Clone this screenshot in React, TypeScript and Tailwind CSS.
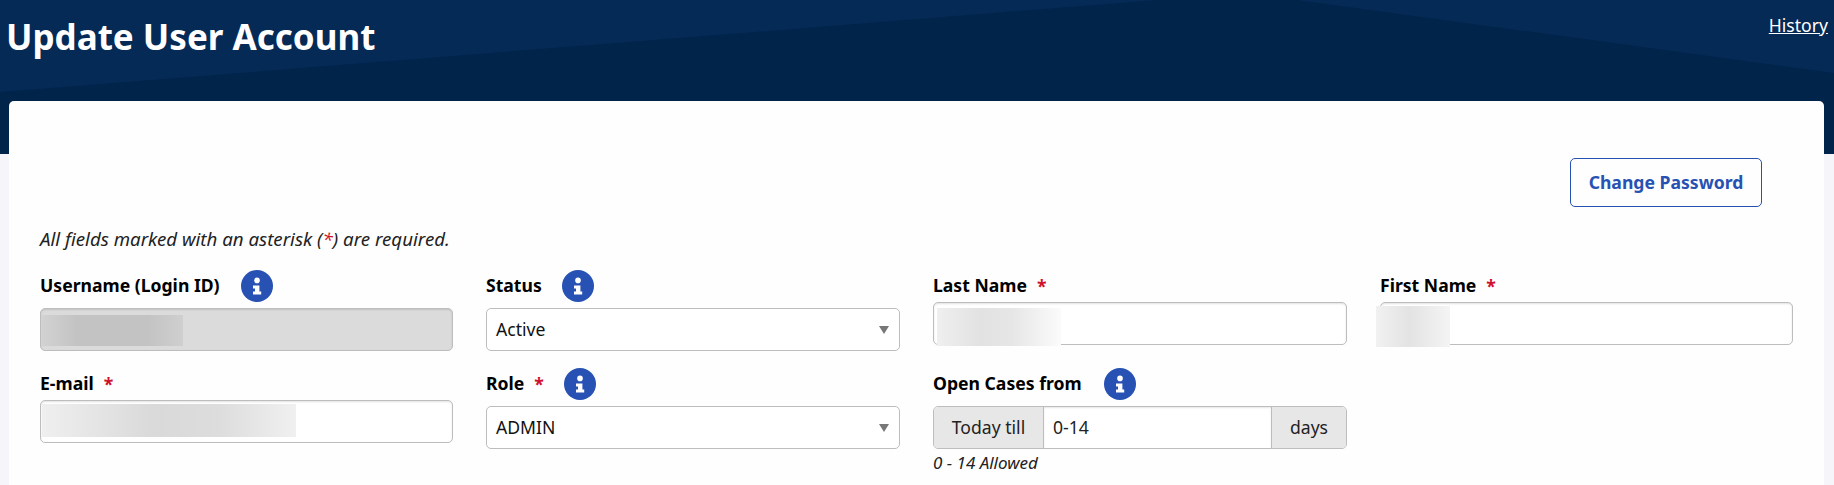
import { ReactNode } from "react";

function Info() {
  return (
    <svg viewBox="0 0 32 32" className="w-8 h-8 shrink-0 block">
      <circle cx="16" cy="16" r="16" fill="#2751b3" />
      <circle cx="16" cy="10.4" r="2.8" fill="#fff" />
      <path d="M12 15.6h6.4v6h1.8v3h-8.2v-3h2v-3h-2z" fill="#fff" />
    </svg>
  );
}

function Req() {
  return <span className="text-[#d0112b] ml-[10px]">*</span>;
}

function Field({
  label,
  required,
  infoGap,
  children,
}: {
  label: string;
  required?: boolean;
  infoGap?: string;
  children: ReactNode;
}) {
  return (
    <div className="flex flex-col">
      <div className="flex items-center h-8 font-bold text-black">
        <span className="-mt-[2px]">{label}</span>
        {required && <Req />}
        {infoGap && (
          <span className={infoGap}>
            <Info />
          </span>
        )}
      </div>
      <div className={infoGap ? "mt-1.5" : ""}>{children}</div>
    </div>
  );
}

const inputClass =
  "relative h-[43px] w-full border border-[#bdbdbd] rounded-[5px] shadow-[inset_0_1px_2px_rgba(0,0,0,0.12)]";

function Blurred({ className }: { className: string }) {
  return <div className={"absolute " + className}></div>;
}

function Select({ value }: { value: string }) {
  return (
    <div className="relative h-[43px] w-full border border-[#bdbdbd] rounded-[5px] bg-white flex items-center pl-[9px] text-[#111]">
      {value}
      <svg viewBox="0 0 10 8" className="absolute right-[10px] top-[17px] w-[10px] h-2">
        <path d="M0 0h10L5 8z" fill="#777" />
      </svg>
    </div>
  );
}

export default function App() {
  return (
    <div className="h-[485px] overflow-hidden bg-[#f5f5fa] font-['Noto_Sans',sans-serif] text-[17.6px]">
      <header className="relative h-[154px] bg-[#052a56] text-white">
        <svg
          className="absolute inset-0 w-full h-full"
          viewBox="0 0 1834 154"
          preserveAspectRatio="none"
        >
          <path d="M0 92L1157 0H1297L1834 73V154H0Z" fill="#00244a" />
        </svg>
        <div className="relative flex justify-between items-start">
          <h1 className="text-[35px] leading-[48px] font-bold pl-[6px] pt-[13px]">
            Update User Account
          </h1>
          <a className="underline pt-[13px] pr-[6px] leading-6" href="#">
            History
          </a>
        </div>
      </header>
      <main className="relative -mt-[53px] ml-[9px] mr-[10px] h-[400px] bg-[#fefefe] rounded-t-[5px] pl-[31px] pr-[31px]">
        <div className="flex justify-end pt-[57px] pr-[31px]">
          <button className="w-[192px] h-[49px] border border-[#2751b3] rounded-[5px] text-[#2751b3] font-bold">
            Change Password
          </button>
        </div>
        <p className="italic text-[18.7px] text-[#222] leading-6 mt-[20px] mb-[19px]">
          All fields marked with an asterisk (<span className="text-[#d0112b]">*</span>) are required.
        </p>
        <div className="grid grid-cols-[413px_414px_414px_413px] gap-x-[33px] gap-y-[17px]">
          <Field label="Username (Login ID)" infoGap="ml-[21px]">
            <div className={inputClass + " bg-[#dbdbdb]"}>
              <Blurred className="left-px top-[6px] w-[141px] h-[31px] bg-[linear-gradient(90deg,#d2d2d2,#c3c3c3_25%,#c3c3c3_75%,#cfcfcf)]" />
            </div>
          </Field>
          <Field label="Status" infoGap="ml-5">
            <Select value="Active" />
          </Field>
          <Field label="Last Name" required>
            <div className={inputClass + " bg-white"}>
              <Blurred className="left-[3px] top-[5px] w-[124px] h-[38px] bg-[linear-gradient(90deg,#efefef,#e2e2e2_35%,#e6e6e6_60%,#fbfbfb)]" />
            </div>
          </Field>
          <Field label="First Name" required>
            <div className={inputClass + " bg-white"}>
              <Blurred className="-left-[5px] top-[3px] w-[74px] h-[41px] bg-[linear-gradient(90deg,#f1f1f1,#e3e3e3_45%,#f4f4f4)]" />
            </div>
          </Field>
          <Field label="E-mail" required>
            <div className={inputClass + " bg-white"}>
              <Blurred className="left-px top-[3px] w-[254px] h-[33px] bg-[linear-gradient(90deg,#efefef,#d9d9d9_45%,#dddddd_70%,#f0f0f0)]" />
            </div>
          </Field>
          <Field label="Role" required infoGap="ml-5">
            <Select value="ADMIN" />
          </Field>
          <div>
            <Field label="Open Cases from" infoGap="ml-[22px]">
              <div className="flex h-[43px] border border-[#bdbdbd] rounded-[5px] overflow-hidden text-[#222]">
                <div className="w-[110px] bg-[#e7e7e7] border-r border-[#bdbdbd] flex items-center justify-center">
                  Today till
                </div>
                <div className="flex-1 bg-white flex items-center pl-[9px] shadow-[inset_0_1px_2px_rgba(0,0,0,0.1)]">
                  0-14
                </div>
                <div className="w-[75px] bg-[#e7e7e7] border-l border-[#bdbdbd] flex items-center justify-center">
                  days
                </div>
              </div>
            </Field>
            <div className="italic text-[17px] text-[#222] leading-5 mt-1">0 - 14 Allowed</div>
          </div>
        </div>
      </main>
    </div>
  );
}
